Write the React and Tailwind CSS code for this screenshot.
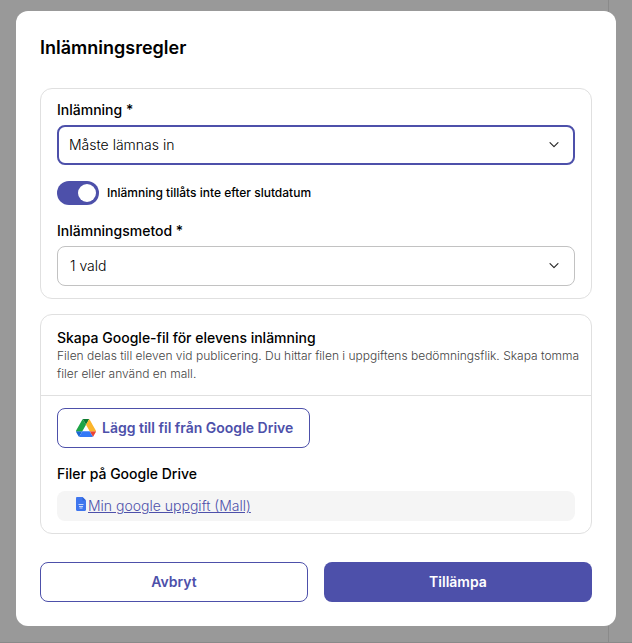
import React, { useState } from 'react';
import clsx from 'clsx';

const ChevronIcon = () => (
  <svg
    className="pointer-events-none absolute right-4 top-1/2 h-2.5 w-2.5 -translate-y-1/2"
    viewBox="0 0 10 10"
    fill="none"
    stroke="#222222"
    strokeWidth="1.1"
    strokeLinecap="round"
    strokeLinejoin="round"
  >
    <path d="M1 2.7l4 4 4-4" />
  </svg>
);

const DriveIcon = () => (
  <svg className="h-[18px] w-5" viewBox="0 0 87.3 78" aria-hidden="true">
    <path d="M6.6 66.85l3.85 6.65c.8 1.4 1.95 2.5 3.3 3.3L27.5 53H0c0 1.55.4 3.1 1.2 4.5z" fill="#1967d2" />
    <path d="M43.65 25L29.9 1.2c-1.35.8-2.5 1.9-3.3 3.3l-25.4 44A9.06 9.06 0 000 53h27.5z" fill="#1ea446" />
    <path d="M73.55 76.8c1.35-.8 2.5-1.9 3.3-3.3l1.6-2.75L86.1 57.5c.8-1.4 1.2-2.95 1.2-4.5H59.8z" fill="#ea4335" />
    <path d="M43.65 25L57.4 1.2C56.05.4 54.5 0 52.9 0H34.4c-1.6 0-3.15.45-4.5 1.2z" fill="#0d7a32" />
    <path d="M59.8 53H27.5L13.75 76.8c1.35.8 2.9 1.2 4.5 1.2h50.8c1.6 0 3.15-.45 4.5-1.2z" fill="#3478f6" />
    <path d="M73.4 26.5L60.7 4.5c-.8-1.4-1.95-2.5-3.3-3.3L43.65 25 59.8 53h27.45c0-1.55-.4-3.1-1.2-4.5z" fill="#fbb52b" />
  </svg>
);

const DocIcon = () => (
  <svg className="mb-1 h-3.5 w-2.5" viewBox="0 0 10 14" aria-hidden="true">
    <path d="M1.2 0H6.5L10 3.5v9.3c0 .7-.5 1.2-1.2 1.2H1.2C.5 14 0 13.5 0 12.8V1.2C0 .5.5 0 1.2 0z" fill="#3f76ee" />
    <path d="M6.5 0L10 3.5H6.5z" fill="#2f62d6" />
    <path d="M2.5 7.5h5M3 9.5h4M3.5 11h3" stroke="#c9d8fb" strokeWidth="1" />
  </svg>
);

const SelectField = ({ id, label, options, active = false }) => (
  <div>
    <label htmlFor={id} className="block pb-1.5 text-sm leading-[18px] font-medium">
      {label}
    </label>
    <div className="relative">
      <select
        id={id}
        className={clsx(
          'block h-10 w-full appearance-none rounded-lg bg-white text-sm font-light outline-none',
          active ? 'border-2 border-[#4d50aa] px-2.5' : 'border border-[#c2c2c2] px-3'
        )}
      >
        {options.map((option) => (
          <option key={option}>{option}</option>
        ))}
      </select>
      <ChevronIcon />
    </div>
  </div>
);

const App = () => {
  const [blockLate, setBlockLate] = useState(true);

  return (
    <div className="relative min-h-screen bg-[#999999] px-4 pt-[11px] pb-[17px] font-['Inter',sans-serif] text-black">
      {/* dimmed page behind the dialog */}
      <div className="absolute inset-0 flex border-b border-[#8a8a8a]">
        <div className="mr-[23px] flex-1 border-r border-[#8a8a8a]" />
      </div>

      <div role="dialog" aria-labelledby="dialog-title" className="relative rounded-xl bg-white p-6">
        <h1 id="dialog-title" className="text-lg leading-[25px] font-semibold">Inlämningsregler</h1>

        <section className="mt-7 rounded-xl border border-[#e0e0e0] px-4 py-3">
          <SelectField id="submission" label="Inlämning *" options={['Måste lämnas in']} active />

          <div className="mt-4 mb-[17px] flex items-center gap-2">
            <input
              id="block-late"
              type="checkbox"
              role="switch"
              checked={blockLate}
              onChange={(e) => setBlockLate(e.target.checked)}
              className="flex h-6 w-[42px] appearance-none items-center rounded-full bg-gray-400 px-[3px] before:h-[18px] before:w-[18px] before:rounded-full before:bg-white checked:justify-end checked:bg-[#4d50aa]"
            />
            <label htmlFor="block-late" className="text-xs font-medium">
              Inlämning tillåts inte efter slutdatum
            </label>
          </div>

          <SelectField id="method" label="Inlämningsmetod *" options={['1 vald']} />
        </section>

        <section className="mt-[15px] rounded-xl border border-[#e0e0e0]">
          <div className="border-b border-[#e0e0e0] pt-3.5 pr-2 pb-3 pl-4">
            <h2 className="text-sm leading-[18px] font-medium">Skapa Google-fil för elevens inlämning</h2>
            <p className="text-xs leading-[18px] font-light text-[#444444]">
              Filen delas till eleven vid publicering. Du hittar filen i uppgiftens bedömningsflik. Skapa tomma filer eller använd en mall.
            </p>
          </div>

          <div className="px-4 py-3">
            <button
              type="button"
              className="flex h-10 items-center gap-1.5 rounded-lg border border-[#4d50aa] pr-4 pl-[18px] text-sm font-semibold text-[#4d50aa]"
            >
              <DriveIcon />
              Lägg till fil från Google Drive
            </button>

            <h3 className="mt-[17px] mb-2 text-sm leading-[18px] font-medium">Filer på Google Drive</h3>
            <div className="flex h-[30px] items-center gap-0.5 rounded-lg bg-[#f5f5f5] px-[19px]">
              <DocIcon />
              <a href="#" className="text-sm font-light text-[#4d50aa] underline">Min google uppgift (Mall)</a>
            </div>
          </div>
        </section>

        <div className="mt-7 grid grid-cols-2 gap-4">
          <button type="button" className="h-10 rounded-lg border border-[#4d50aa] text-sm font-semibold text-[#4d50aa]">
            Avbryt
          </button>
          <button type="button" className="h-10 rounded-lg bg-[#4d50aa] text-sm font-semibold text-white">
            Tillämpa
          </button>
        </div>
      </div>
    </div>
  );
};

export default App;
